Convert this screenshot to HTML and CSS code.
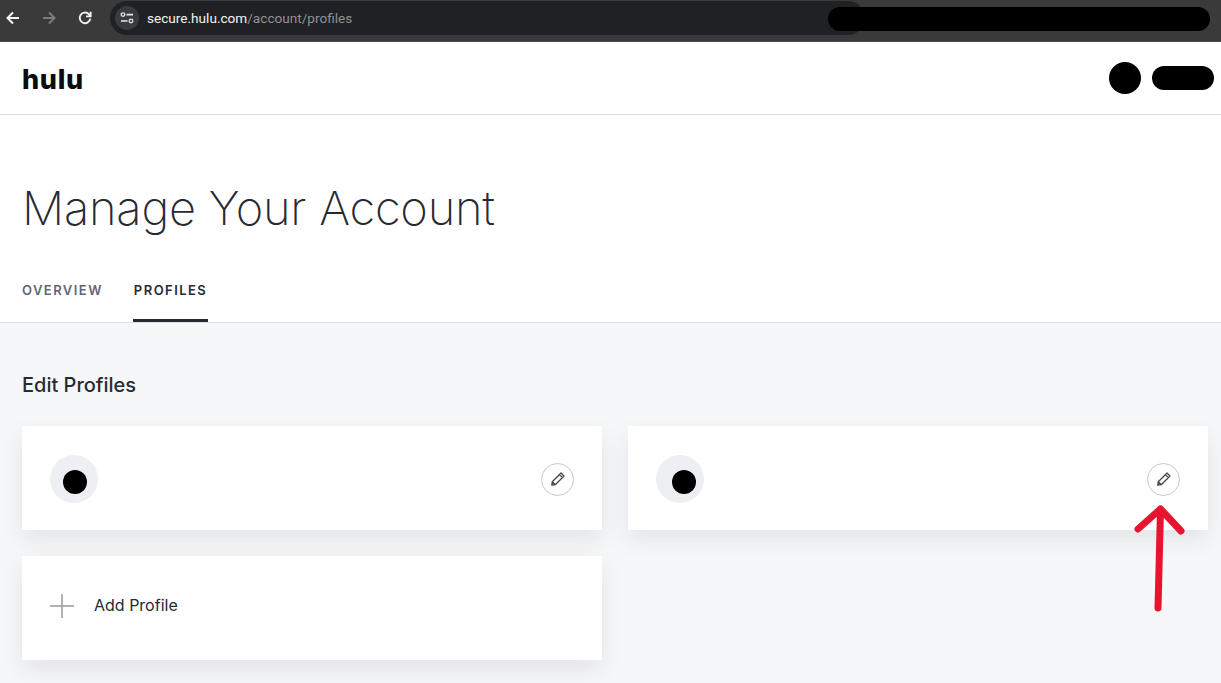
FILE: index.html
```html
<!DOCTYPE html>
<html lang="en">
<head>
<meta charset="utf-8">
<title>Manage Your Account - Hulu</title>
<link rel="stylesheet" href="styles.css">
</head>
<body>
<div class="browser-bar">
  <div class="nav-buttons">
    <svg class="nav-icon" viewBox="0 0 14 14"><path d="M13 7H2M7 1.5 1.500 7 7 12.500" fill="none" stroke="#f4f4f4" stroke-width="2"/></svg>
    <svg class="nav-icon" viewBox="0 0 14 14"><path d="M1 7h11M7 1.5 12.500 7 7 12.500" fill="none" stroke="#7b7b7b" stroke-width="2"/></svg>
    <svg class="nav-icon" viewBox="0 0 14 14"><path d="M12.300 7.600A5.300 5.300 0 1 1 10.800 3.100L12.400 4.700M12.600 .8v4.600H8" fill="none" stroke="#f4f4f4" stroke-width="1.900"/></svg>
  </div>
  <div class="address">
    <span class="site-icon">
      <svg viewBox="0 0 14 12" width="14" height="12"><circle cx="3" cy="2.600" r="1.800" fill="none" stroke="#e6e6e6" stroke-width="1.300"/><path d="M6.500 2.600H13M1 9h6.500" stroke="#e6e6e6" stroke-width="1.700"/><circle cx="11" cy="9" r="1.800" fill="none" stroke="#e6e6e6" stroke-width="1.300"/></svg>
    </span>
    <span class="url"><span class="url-host">secure.hulu.com</span>/account/profiles</span>
  </div>
</div>
<div class="redact-bar"></div>

<header class="site-header">
  <div class="logo">hulu</div>
  <div class="account">
    <span class="account-dot"></span>
    <span class="account-pill"></span>
  </div>
</header>

<section class="hero">
  <h1>Manage Your Account</h1>
  <nav class="tabs">
    <a class="tab">OVERVIEW</a>
    <a class="tab tab-active">PROFILES</a>
  </nav>
</section>

<main class="content">
  <h2>Edit Profiles</h2>
  <div class="cards">
    <div class="card card-profile">
      <span class="avatar"><span class="avatar-dot"></span></span>
      <button class="edit" aria-label="Edit profile">
        <svg viewBox="0 0 16 16" width="16" height="16"><path d="M11 2 14 5 5.300 13.700 1.800 14.200 2.300 10.700ZM9.400 3.600 12.400 6.600M2.300 10.700 5.300 13.700" fill="none" stroke="#44474f" stroke-width="1.300" stroke-linejoin="round"/></svg>
      </button>
    </div>
    <div class="card card-profile">
      <span class="avatar"><span class="avatar-dot avatar-dot-alt"></span></span>
      <button class="edit" aria-label="Edit profile">
        <svg viewBox="0 0 16 16" width="16" height="16"><path d="M11 2 14 5 5.300 13.700 1.800 14.200 2.300 10.700ZM9.400 3.600 12.400 6.600M2.300 10.700 5.300 13.700" fill="none" stroke="#44474f" stroke-width="1.300" stroke-linejoin="round"/></svg>
      </button>
    </div>
    <div class="card card-add">
      <svg class="plus" viewBox="0 0 24 24" width="24" height="24"><path d="M12 0v24M0 12h24" stroke="#9599a6" stroke-width="1.500"/></svg>
      <span class="add-label">Add Profile</span>
    </div>
  </div>
</main>

<svg class="arrow" viewBox="0 0 60 116" width="60" height="116"><path d="M30.500 10 28 109M8 30 30.500 10 51 32" fill="none" stroke="#e8142f" stroke-width="7" stroke-linecap="round" stroke-linejoin="round"/></svg>
</body>
</html>
```
FILE: styles.css
```css
* { box-sizing: border-box; }
html, body { margin: 0; padding: 0; }
body {
  position: relative;
  height: 683px;
  overflow: hidden;
  background: #f6f7f9;
  color: #272a33;
  font-family: "Inter", "Liberation Sans", sans-serif;
}

.browser-bar {
  display: flex;
  align-items: flex-start;
  height: 42px;
  padding-top: 1px;
  background: #3a3a3a;
  border-bottom: 1px solid #4a4a4a;
}
.nav-buttons {
  display: flex;
  align-items: center;
  gap: 22px;
  width: 110px;
  height: 34px;
  padding-left: 6px;
}
.nav-icon { width: 14px; height: 14px; flex: none; }
.address {
  display: flex;
  align-items: center;
  gap: 8px;
  width: 755px;
  height: 34px;
  padding-left: 5px;
  border-radius: 17px;
  background: #202124;
}
.site-icon {
  display: flex;
  align-items: center;
  justify-content: center;
  width: 24px;
  height: 24px;
  border-radius: 50%;
  background: #3a3b3e;
}
.url {
  font-family: "Roboto", "Liberation Sans", sans-serif;
  font-size: 13.600px;
  color: #8f9195;
}
.url-host { color: #f1f3f4; }
.redact-bar {
  position: absolute;
  left: 828px;
  top: 7px;
  width: 382px;
  height: 24px;
  border-radius: 12px;
  background: #000;
}

.site-header {
  display: flex;
  align-items: center;
  justify-content: space-between;
  height: 73px;
  padding: 0 7px 0 22px;
  background: #fff;
  border-bottom: 1px solid #dcdee5;
}
.logo {
  padding-top: 2px;
  font-family: "Inter", "Liberation Sans", sans-serif;
  font-size: 27px;
  font-weight: 800;
  line-height: 1;
  letter-spacing: 0.7px;
  color: #0b0c0f;
}
.account { display: flex; align-items: center; gap: 11px; }
.account-dot { width: 32px; height: 32px; border-radius: 50%; background: #000; }
.account-pill { width: 62px; height: 24px; border-radius: 12px; background: #000; }

.hero {
  height: 208px;
  padding: 63px 0 0 22px;
  background: #fff;
  border-bottom: 1px solid #dcdee5;
}
h1 {
  margin: 0;
  font-size: 47px;
  font-weight: 200;
  line-height: 60px;
  letter-spacing: -0.22px;
  color: #272a33;
}
.tabs { display: flex; gap: 31px; margin-top: 36px; }
.tab {
  display: block;
  height: 48px;
  padding-top: 7px;
  font-size: 13px;
  font-weight: 600;
  line-height: 18px;
  letter-spacing: 1.450px;
  color: #626778;
}
.tab-active {
  margin-left: -1px;
  padding: 7px 1px 0;
  color: #272a33;
  border-bottom: 3px solid #272a33;
}

.content { padding: 49px 13px 0 22px; }
h2 {
  margin: 0 0 28px;
  font-size: 20px;
  font-weight: 500;
  line-height: 26px;
  color: #272a33;
}
.cards {
  display: grid;
  grid-template-columns: 580px 580px;
  grid-auto-rows: 104px;
  gap: 26px;
}
.card {
  display: flex;
  align-items: center;
  justify-content: space-between;
  padding: 0 28px;
  background: #fff;
  box-shadow: 0 10px 22px rgba(40, 45, 60, 0.09);
}
.card-profile { padding-top: 2px; }
.avatar {
  display: flex;
  align-items: center;
  justify-content: center;
  width: 48px;
  height: 48px;
  border-radius: 50%;
  background: #eeeff3;
}
.avatar-dot {
  width: 24px;
  height: 24px;
  margin: 6px 0 0 2px;
  border-radius: 50%;
  background: #000;
}
.avatar-dot-alt { margin-left: 7px; }
.edit {
  display: flex;
  align-items: center;
  justify-content: center;
  width: 33px;
  height: 33px;
  padding: 0;
  border: 1px solid #c5c8d3;
  border-radius: 50%;
  background: #fff;
}
.card-add { justify-content: flex-start; gap: 20px; padding-bottom: 5px; }
.plus { flex: none; margin-top: 1px; }
.add-label { margin-bottom: 1px; font-size: 16px; line-height: 20px; color: #272a33; }

.arrow {
  position: absolute;
  left: 1130px;
  top: 499px;
}
```
